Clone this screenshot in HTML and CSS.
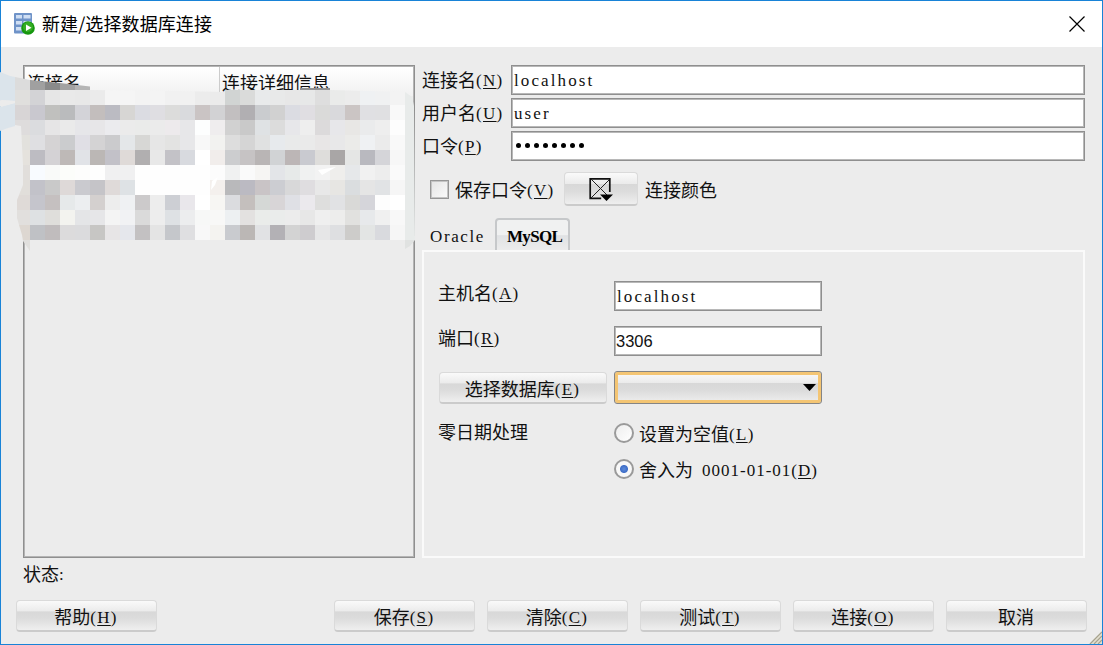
FILE: index.html
```html
<!DOCTYPE html>
<html lang="zh-CN">
<head>
  <meta charset="UTF-8" />
  <title>新建/选择数据库连接</title>
  <link rel="stylesheet" href="styles.css">
</head>
<body>

  <div class="window">
    <header class="titlebar">
      <svg class="app-icon" width="23" height="23" viewBox="0 0 23 23">
        <rect x="1" y="0" width="18" height="20.500" rx="1" fill="#6f93c8"/>
        <path d="M3 2h6v3.500H3zM10.500 2h7v3.500h-7zM3 8h6v3.500H3zM10.500 8h7v3.500h-7zM3 14h6v3.500H3zM10.500 14h7v3.500h-7z" fill="#cfdef3"/>
        <circle cx="15" cy="15" r="6.800" fill="#16970f"/>
        <circle cx="15" cy="14" r="5" fill="#35ad24"/>
        <path d="M13 11.500v6.500l5.500-3.300z" fill="#fff"/>
      </svg>
      <h1>新建/选择数据库连接</h1>
      <svg class="close" width="16" height="16" viewBox="0 0 16 16">
        <path d="M.5 .5l15 15M15.500 .5l-15 15" stroke="#000" stroke-width="1.200"/>
      </svg>
    </header>

    <main>
      <section class="list">
        <div class="list-head">
          <div>连接名</div>
          <div>连接详细信息</div>
        </div>
      </section>

      <section class="details">
        <div class="row">
          <label>连接名<span class="en">(<u>N</u>)</span></label>
          <div class="field en">localhost</div>
        </div>
        <div class="row">
          <label>用户名<span class="en">(<u>U</u>)</span></label>
          <div class="field en">user</div>
        </div>
        <div class="row">
          <label>口令<span class="en">(<u>P</u>)</span></label>
          <div class="field dots">
            <i></i><i></i><i></i><i></i><i></i><i></i><i></i><i></i>
          </div>
        </div>

        <div class="options">
          <span class="check"></span>
          <span class="check-text">保存口令<span class="en">(<u>V</u>)</span></span>
          <div class="btn color-btn">
            <svg width="24" height="24" viewBox="0 0 24 24">
              <path d="M20.800 15V1.800H1.200v19.500h11" fill="none" stroke="#111" stroke-width="1.700"/>
              <path d="M2 2l18 18M20 3L2 21" stroke="#222" stroke-width="1"/>
              <path d="M11 17.500h13l-6.500 6.500z" fill="#000"/>
            </svg>
          </div>
          <span>连接颜色</span>
        </div>

        <div class="tabs">
          <div class="tab en">Oracle</div>
          <div class="tab active en">MySQL</div>
        </div>
        <div class="panel">
          <div class="panel-label">主机名<span class="en">(<u>A</u>)</span></div>
          <div class="field en">localhost</div>

          <div class="panel-label">端口<span class="en">(<u>R</u>)</span></div>
          <div class="field port">3306</div>

          <div class="btn db-btn"><span>选择数据库<span class="en">(<u>E</u>)</span></span></div>
          <div class="combo">
            <svg width="13" height="7" viewBox="0 0 13 7"><path d="M0 0h13L6.500 7z"/></svg>
          </div>

          <div class="panel-label zero">零日期处理</div>
          <div class="radio"><span class="circle"></span><span>设置为空值<span class="en">(<u>L</u>)</span></span></div>

          <div></div>
          <div class="radio"><span class="circle on"></span><span>舍入为<span class="en date">0001-01-01(<u>D</u>)</span></span></div>
        </div>
      </section>
    </main>

    <div class="status">状态<span class="en">:</span></div>

    <footer>
      <div class="btn help"><span>帮助<span class="en">(<u>H</u>)</span></span></div>
      <div class="btn"><span>保存<span class="en">(<u>S</u>)</span></span></div>
      <div class="btn"><span>清除<span class="en">(<u>C</u>)</span></span></div>
      <div class="btn"><span>测试<span class="en">(<u>T</u>)</span></span></div>
      <div class="btn"><span>连接<span class="en">(<u>O</u>)</span></span></div>
      <div class="btn"><span>取消</span></div>
    </footer>

    <svg class="grip" width="14" height="14" viewBox="0 0 14 14">
      <path d="M1 14L14 1v13z" fill="#e2dfd0"/>
      <path d="M2 14L14 2M6 14l8-8M10 14l4-4" stroke="#a5a18e" stroke-width="1.200"/>
    </svg>
  </div>

  <svg class="mosaic" width="420" height="255" viewBox="0 0 420 255">
    <defs>
      <clipPath id="smear">
        <path d="M15 77L30 80L60 83L90 86.500V90L175 91L225 92V90H300V88H330V90L405 92L412 97L414 106L415 240L410 246L405 249V240H30V251L23 241L22 235L17 218V200L23 185L23 165L21 126L15 125Z"/>
      </clipPath>
    </defs>
    <path d="M0 72L10 76L15 77V101L0 100ZM0 107L15 103V126L8 128L0 131Z" fill="#dbe4eb"/>
    <path d="M0 100L15 101V103L0 107Z" fill="#ececec"/>
    <g id="cells" clip-path="url(#smear)"></g>
    <path d="M212 181l6-4-3 8-4 5zM318 170l18-3-14 8z" fill="#fff"/>
  </svg>

  <script src="mosaic.js"></script>
</body>
</html>
```
FILE: styles.css
```css
* {
  box-sizing: border-box;
}

body {
  margin: 0;
  font-family: "Noto Sans CJK SC", sans-serif;
  font-size: 18px;
  line-height: 24px;
  color: #111;
  white-space: nowrap;
}

.window {
  position: relative;
  width: 1103px;
  height: 645px;
  border: 1px solid #1883d7;
  background-color: #ececec;
  overflow: hidden;
}

.titlebar {
  display: flex;
  align-items: center;
  height: 46px;
  padding: 0 17px 0 12px;
  background-color: #fff;
}

.titlebar h1 {
  flex: 1;
  margin: 0 0 2px 6px;
  font-size: 18px;
  font-weight: normal;
  letter-spacing: 0.1px;
  color: #000;
}

.en {
  font-family: "Liberation Serif", serif;
  font-size: 17px;
  letter-spacing: 1.3px;
}

span.en {
  vertical-align: 1px;
  line-height: 20px;
}

u {
  text-underline-offset: 2px;
  text-decoration-thickness: 1px;
}

main {
  display: flex;
  gap: 7px;
  height: 493px;
  margin: 18px 17px 0 22px;
}

.list {
  width: 392px;
  border: 1px solid #8f8f8f;
  box-shadow: inset 0 0 0 1px #b4b4b4;
  padding: 1px;
}

.list-head {
  display: flex;
  height: 29px;
  background: linear-gradient(#fff, #f1f1f1);
  line-height: 30px;
}

.list-head div {
  width: 194px;
  padding-left: 2px;
}

.list-head div + div {
  border-left: 1px solid #ccc;
}

.details {
  width: 663px;
}

.row {
  display: flex;
  height: 30px;
  margin-bottom: 3px;
}

.row label {
  width: 89px;
  line-height: 28px;
}

.field {
  flex: 1;
  height: 30px;
  padding-left: 2px;
  border: 1px solid #8f8f8f;
  background-color: #fff;
  box-shadow: inset 0 0 0 1px #b8b8b8;
  line-height: 29px;
}

.field.en {
  letter-spacing: 2.1px;
}

.dots {
  display: flex;
  padding: 11px 0 0 4px;
}

.dots i {
  width: 5px;
  height: 5px;
  margin-right: 4px;
  border-radius: 50%;
  background-color: #000;
}

.btn {
  display: flex;
  align-items: center;
  justify-content: center;
  height: 32px;
  padding-right: 1px;
  border: 1px solid #dadada;
  border-bottom: 2px solid #cbcbcb;
  border-radius: 4px;
  background: linear-gradient(#fafafa, #ebebeb 35%, #d8d8d8 37%, #dcdcdc 60%, #efefef);
}

.options {
  display: flex;
  align-items: center;
  height: 34px;
  margin-top: 11px;
  padding-left: 8px;
}

.check {
  width: 19px;
  height: 19px;
  margin-right: 6px;
  border: 1px solid #969696;
  background: linear-gradient(135deg, #e4e4e4, #fbfbfb);
  box-shadow: inset 0 0 0 1px #c4c4c4;
}

.check-text {
  width: 109px;
}

.color-btn {
  width: 74px;
  height: 34px;
  margin-right: 7px;
}

.tabs {
  display: flex;
  height: 32px;
  margin-top: 12px;
}

.tab {
  width: 73px;
  padding: 7px 0 0 8px;
  letter-spacing: 1.6px;
}

.active {
  width: 75px;
  padding: 5px 0 0 10px;
  border: 2px solid #c6c8ca;
  border-bottom: none;
  border-radius: 4px 4px 0 0;
  background: linear-gradient(#f0f1f1 50%, #e0e2e4 52%, #ececec);
  font-weight: bold;
  letter-spacing: -0.7px;
  color: #000;
}

.panel {
  display: grid;
  grid-template-columns: 176px 208px;
  grid-template-rows: 45px 45px 52px 36px 36px;
  height: 308px;
  padding: 29px 0 0 14px;
  border: 2px solid #fafafa;
}

.panel .field {
  flex: none;
}

.panel .port {
  padding-left: 1px;
  font-family: "Liberation Sans", sans-serif;
  font-size: 16.5px;
}

.panel-label {
  margin-top: -1px;
}

.panel .zero {
  margin-top: -4px;
}

.db-btn {
  width: 168px;
  margin: 1px 0 0 1px;
}

.combo {
  display: flex;
  align-items: center;
  justify-content: flex-end;
  height: 33px;
  padding-right: 5px;
  border: 1px solid #858585;
  border-radius: 3px;
  background: linear-gradient(#fafafa, #ebebeb 35%, #d8d8d8 37%, #dcdcdc 60%, #efefef);
  box-shadow: inset 0 0 0 3px #f4c573;
}

.radio {
  display: flex;
  align-items: center;
  height: 24px;
  margin-top: -2px;
}

.circle {
  width: 20px;
  height: 20px;
  margin-right: 5px;
  border: 2px solid #9a9a9a;
  border-radius: 50%;
  background: linear-gradient(135deg, #eee, #fff);
}

.on {
  background: radial-gradient(circle at 50% 50%, #5c8bdc 0, #3f6ec7 3.5px, #f8f8f8 4.5px);
}

.date {
  margin-left: 9px;
  letter-spacing: 1px;
}

.status {
  height: 24px;
  margin: 3px 0 0 22px;
}

footer {
  display: flex;
  gap: 12px;
  margin: 15px 15px 0;
}

footer .btn {
  width: 141px;
}

footer .help {
  margin-right: 165px;
}

.grip {
  position: absolute;
  right: 0;
  bottom: 0;
}

.mosaic {
  position: absolute;
  left: 0;
  top: 0;
}
```
FILE: mosaic.js
```js
// one row per 15px band, starting at x = 15, y = 75
const rows = [
  'dcdcdc a0a0a0 8a8a8a a2a2a2 b4b4b4 d8d8d8 f5f5f5 f5f5f5 f5f5f5 f3f3f3 f3f3f3 f3f3f3 f0f0f0 f0f0f0 e6e6e6 e8e8e8 eeeeee e8e8e8 e8e8e8 909090 909090 eeeeee eeeeee eeeeee f2f2f2 f4f4f4 ebebeb',
  'e0dfdd d3d3d6 e6e6e6 e9e9e9 e8e8e8 ebebeb f5f5f5 f5f5f5 f3f3f3 f4f4f4 f1f1f1 f1f1f1 ececec ebebeb d1d4d3 dadbda e8eaeb e8e9e9 e7e7e7 e7e8e8 dedede eaebea ececec eff1f3 f0f1f2 f3f3f3 e8ebea',
  'd8d5d6 c9c8cf c0c0be babbbd d3d3d8 c3bebd bbbbc2 d7d6d4 dbdce2 dfdee2 dcdcdb d9dadd cac4c4 d2d2d4 c2bfc0 b1afb2 cacccf d1d1d1 dbdce2 e0dee2 dadad9 d9d9dc cbc5c4 e0e0e3 e0e0e2 f9f9f9 e8ebea',
  'dedcdc dbdcdf e6e5e6 eaeaea e6e6e9 e7e6e8 ebebee ebebeb eaebea ebebeb edeaec e7e7e9 fdfefe efedee d1d1d1 c9c9c9 dfe2e4 dcdcdc e7e7ea eeeeee dcdadb e7e7ea e8e7e5 eaebec eeeeee fdfdfd e8ebea',
  'e2e1dd dfdfe2 d5d3d4 cbccce e0dfe5 d4d3d4 cbcbcd e4e7e9 d7d7d5 e6e6e6 e3e3e2 e7e7e9 f8f8f8 f2f2f0 dddddd d5d5d5 e0e1e1 e7eaed e9eaea eaeaea e8e6e6 e8e8e9 ebebe9 eff1f3 ebebeb f9f9f9 e8ebea',
  'e5e2dd bdbcc2 d4d2d5 beb9b7 e1e3e7 bbb7b5 c2c1c8 dfdad8 b1afb0 e8e8e8 c3c2c7 d8dadf ffffff f1edeb cccdcf c6c3c4 b9b5b5 d1d3d5 bcb6b6 c9cad0 dedddb a9a6a6 e5e6e5 b9b9bf d5d5d9 f7f7f7 e8ebea',
  'e1dedb f8fbff f9faf9 fcfdfa fdfdfc fefefe f0f0f1 f0f0f1 fefefe fefefe fefefe fefefe fefefe fcfcfc f0f1f1 fafafa f6f5f3 e3e5e8 e7eae9 f0f1f1 f3f3f3 efeeec e6e8ea f1f1f1 ededed fafafa e8ebea',
  'e1deda c2c2c9 c9c9c9 ded9d8 cacacf c5c4c8 dfdad9 dee2e5 fefefe fefefe fefefe fefefe fefefe f4f0ed b9b9bb bbbac2 c9c4c6 cccdd2 d8d8d9 dfdde0 e8e8e8 e7e6e3 dadddf e5e5e5 e1e3e5 f6f6f6 e8ebea',
  'dfdad7 c5c5cc c5c0c0 e6e9ea eceef0 d4d0cf ededed eff1f3 cccacb ededed cdcfd4 e9e7eb ffffff f7f6f3 dbdcdf c4bfbd d5d8d6 d8d5d7 dfe0e5 ebe9ed dededd e1e2e4 d9d9d7 d5d5da fdfdfd ffffff e8ebea',
  'e1dfdd dee1e3 dfdedb f3f3ef e4e5e7 e6e6e8 f4f4f4 f1f2f4 dadada ededed dee1e4 ecedee f7f8f7 f8f8f7 edf0f2 e3e1e0 eaecea eaeceb ececec e7e7e7 efefef ededec e1e1df e7e9eb f0f0f0 f8f8f8 e8ebea',
  'ddd7d1 bfc1c5 c0bcbd dcdbdc dbdbdd c7c6c4 e7e5e6 e5e7ec c3c1c2 e4e4e4 c5c7cb dfdfe1 f8f8f8 f4f3f0 c9cbcf bbb7b5 e1e2e4 b3b1b5 d3d3d3 cecccf e6e6e7 dedfe1 cdccca e3e5e4 d9dade f6f6f6 e8ebea',
  'e0dfdd ececec ececec ececec ececec ececec ececec ececec ececec ececec ececec ececec ececec ececec ececec ececec ececec ececec ececec ececec ececec ececec ececec ececec ececec ececec e0e2e1'
];

const cells = document.getElementById('cells');

rows.forEach((row, r) => {
  row.split(' ').forEach((color, c) => {
    const rect = document.createElementNS('http://www.w3.org/2000/svg', 'rect');
    rect.setAttribute('x', 15 + c * 15);
    rect.setAttribute('y', 75 + r * 15);
    rect.setAttribute('width', 15);
    rect.setAttribute('height', 15);
    rect.setAttribute('fill', '#' + color);
    cells.appendChild(rect);
  });
});
```
